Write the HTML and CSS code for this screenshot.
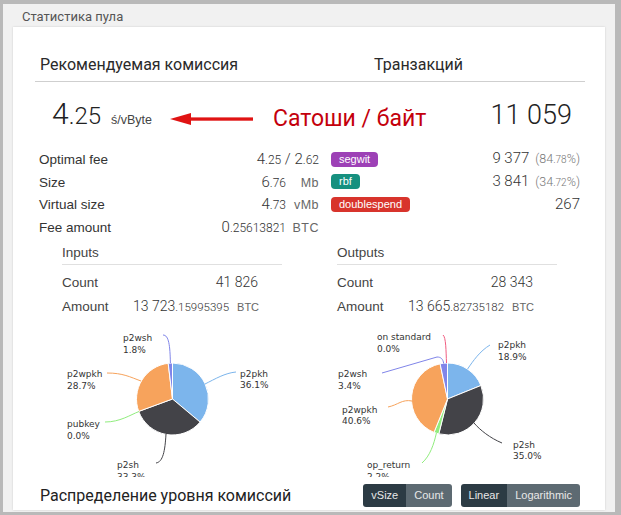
FILE: index.html
```html
<!DOCTYPE html>
<html lang="ru">
<head>
    <meta charset="UTF-8">
    <meta name="viewport" content="width=device-width, initial-scale=1.0">
    <title>Статистика пула</title>
    <link rel="stylesheet" href="styles.css">
</head>
<body>

    <div class="frame">
        <div class="panel-title">Статистика пула</div>

        <div class="card">
            <div class="head-row">
                <div class="head-left">Рекомендуемая комиссия</div>
                <div class="head-right">Транзакций</div>
            </div>

            <div class="big-row">
                <div class="big-left">
                    <span class="big-num">4<small>.25</small></span>
                    <span class="big-unit">ś/vByte</span>
                </div>
                <div class="big-right">11 059</div>
            </div>

            <!-- red annotation over the screenshot -->
            <div class="note">
                <svg class="note-arrow" width="84" height="14" viewBox="0 0 84 14">
                    <polygon points="0,7 21,1 21,13" fill="#e01313"/>
                    <rect x="19" y="5.4" width="64" height="3.3" fill="#e01313"/>
                </svg>
                <span class="note-text">Сатоши / байт</span>
            </div>

            <div class="stats">
                <div class="stat-list">
                    <div class="stat-row">
                        <span class="label">Optimal fee</span>
                        <span class="val">4<small>.25</small> / 2<small>.62</small></span>
                    </div>
                    <div class="stat-row">
                        <span class="label">Size</span>
                        <span class="val">6<small>.76</small><span class="unit">Mb</span></span>
                    </div>
                    <div class="stat-row">
                        <span class="label">Virtual size</span>
                        <span class="val">4<small>.73</small><span class="unit">vMb</span></span>
                    </div>
                    <div class="stat-row">
                        <span class="label">Fee amount</span>
                        <span class="val">0<small>.25613821</small><span class="unit">BTC</span></span>
                    </div>
                </div>
                <div class="stat-list right">
                    <div class="stat-row">
                        <span class="badge segwit">segwit</span>
                        <span class="val">9 377<span class="pct">(84<small>.78</small>%)</span></span>
                    </div>
                    <div class="stat-row">
                        <span class="badge rbf">rbf</span>
                        <span class="val">3 841<span class="pct">(34<small>.72</small>%)</span></span>
                    </div>
                    <div class="stat-row">
                        <span class="badge double">doublespend</span>
                        <span class="val">267</span>
                    </div>
                </div>
            </div>

            <div class="io">
                <div class="io-block">
                    <div class="io-title">Inputs</div>
                    <div class="io-table">
                        <div class="io-row">
                            <span class="label">Count</span>
                            <span class="val">41 826</span>
                        </div>
                        <div class="io-row">
                            <span class="label">Amount</span>
                            <span class="val">13 723<small>.15995395</small><span class="btc">BTC</span></span>
                        </div>
                    </div>
                </div>
                <div class="io-block">
                    <div class="io-title">Outputs</div>
                    <div class="io-table">
                        <div class="io-row">
                            <span class="label">Count</span>
                            <span class="val">28 343</span>
                        </div>
                        <div class="io-row">
                            <span class="label">Amount</span>
                            <span class="val">13 665<small>.82735182</small><span class="btc">BTC</span></span>
                        </div>
                    </div>
                </div>
            </div>

            <div class="pies">
                <svg class="pie" width="275" height="151" viewBox="0 0 275 151">
                    <path class="slice" d="M137.5 73 L137.5 37 A36 36 0 0 1 165.1 96.1 Z" fill="#7cb5ec"/>
                    <path class="slice" d="M137.5 73 L165.1 96.1 A36 36 0 0 1 103.7 85.4 Z" fill="#434348"/>
                    <path class="slice" d="M137.5 73 L103.7 85.4 A36 36 0 0 1 133.2 37.3 Z" fill="#f7a35c"/>
                    <path class="slice" d="M137.5 73 L133.2 37.3 A36 36 0 0 1 137.5 37 Z" fill="#8085e9"/>

                    <path class="lnk" d="M128 9 C134 9 135 20 135.4 37" stroke="#8085e9"/>
                    <path class="lnk" d="M72 47 C88 47 95 51 106 55" stroke="#f7a35c"/>
                    <path class="lnk" d="M70 96 C85 96 95 89 104 85.5" stroke="#90ed7d"/>
                    <path class="lnk" d="M121 137 C128 136 130 125 131 108" stroke="#434348"/>
                    <path class="lnk" d="M201 46 C190 47 180 53 170 58" stroke="#7cb5ec"/>

                    <text x="88" y="15">p2wsh</text><text x="88" y="27">1.8%</text>
                    <text x="32" y="51">p2wpkh</text><text x="32" y="63">28.7%</text>
                    <text x="32" y="101">pubkey</text><text x="32" y="113">0.0%</text>
                    <text x="82" y="142">p2sh</text><text x="82" y="154">33.3%</text>
                    <text x="205" y="51">p2pkh</text><text x="205" y="62">36.1%</text>
                </svg>

                <svg class="pie" width="275" height="151" viewBox="0 0 275 151">
                    <path class="slice" d="M137.5 73 L137.5 37 A36 36 0 0 1 170.9 59.5 Z" fill="#7cb5ec"/>
                    <path class="slice" d="M137.5 73 L170.9 59.5 A36 36 0 0 1 128.8 107.9 Z" fill="#434348"/>
                    <path class="slice" d="M137.5 73 L128.8 107.9 A36 36 0 0 1 124 106.4 Z" fill="#90ed7d"/>
                    <path class="slice" d="M137.5 73 L124 106.4 A36 36 0 0 1 130.1 37.8 Z" fill="#f7a35c"/>
                    <path class="slice" d="M137.5 73 L130.1 37.8 A36 36 0 0 1 137.5 37 Z" fill="#8085e9"/>

                    <path class="lnk" d="M133 9 C136 11 136 25 136.5 37" stroke="#f15c80"/>
                    <path class="lnk" d="M72 47 L127 31 C131 31 133 33 133.7 37.5" stroke="#8085e9"/>
                    <path class="lnk" d="M78 81 C88 79 92 73 102 75" stroke="#f7a35c"/>
                    <path class="lnk" d="M112 137 C120 130 124 118 126.4 107" stroke="#90ed7d"/>
                    <path class="lnk" d="M180 19 C170 25 163 35 157.6 43" stroke="#7cb5ec"/>
                    <path class="lnk" d="M192 117 C180 112 170 104 164 97" stroke="#434348"/>

                    <text x="67" y="14">on standard</text><text x="67" y="26">0.0%</text>
                    <text x="28" y="51">p2wsh</text><text x="28" y="63">3.4%</text>
                    <text x="32" y="87">p2wpkh</text><text x="32" y="98">40.6%</text>
                    <text x="57" y="142">op_return</text><text x="57" y="154">2.2%</text>
                    <text x="188" y="22">p2pkh</text><text x="188" y="34">18.9%</text>
                    <text x="203" y="122">p2sh</text><text x="203" y="133">35.0%</text>
                </svg>
            </div>

            <div class="dist-row">
                <div class="dist-title">Распределение уровня комиссий</div>
                <div class="btn-groups">
                    <div class="btn-group">
                        <span class="btn active">vSize</span>
                        <span class="btn">Count</span>
                    </div>
                    <div class="btn-group">
                        <span class="btn active">Linear</span>
                        <span class="btn">Logarithmic</span>
                    </div>
                </div>
            </div>
        </div>
    </div>

</body>
</html>
```

FILE: styles.css
```css
body {
    margin: 0;
    padding: 0;
    font-family: "Liberation Sans", Arial, sans-serif;
    background: #b9b9b9;
}

.frame {
    width: 621px;
    height: 515px;
    box-sizing: border-box;
    border-style: solid;
    border-color: #b9b9b9;
    border-width: 4px 6px 3px 3px;
    background: #f1f1f1;
    padding: 0 10px 2px 10px;
    display: flex;
    flex-direction: column;
}

.panel-title {
    height: 23px;
    line-height: 25px;
    margin-left: 9px;
    font-family: Roboto, sans-serif;
    font-size: 13px;
    color: #555;
}

.card {
    position: relative;
    flex: 1;
    background: #fff;
    box-shadow: 0 0 2px rgba(0, 0, 0, 0.15);
    padding: 28px 20px 0 22px;
}

/* header */
.head-row {
    display: grid;
    grid-template-columns: 1fr 1fr;
    padding-bottom: 6px;
    border-bottom: 1px solid #cfcfcf;
    font-family: Roboto, sans-serif;
    font-size: 16px;
    line-height: 20px;
    color: #2a2a2a;
}
.head-left {
    padding-left: 5px;
}
.head-right {
    padding-left: 64px;
}

.big-row {
    display: grid;
    grid-template-columns: 1fr 1fr;
    align-items: baseline;
    height: 66px;
    box-sizing: border-box;
    padding-top: 17px;
}
.big-left {
    display: flex;
    align-items: baseline;
    padding-left: 17px;
}
.big-num {
    font-family: Roboto, sans-serif;
    font-weight: 300;
    font-size: 30px;
    line-height: 30px;
    color: #222;
}
.big-num small {
    font-size: 24px;
}
.big-unit {
    margin-left: 10px;
    font-size: 12.5px;
    color: #444;
}
.big-right {
    text-align: right;
    padding-right: 13px;
    font-family: Roboto, sans-serif;
    font-weight: 300;
    font-size: 27px;
    line-height: 30px;
    color: #222;
}

/* annotation */
.note {
    position: absolute;
    left: 157px;
    top: 78px;
    display: flex;
    align-items: center;
}
.note-arrow {
    display: block;
}
.note-text {
    margin-left: 19px;
    font-family: Roboto, sans-serif;
    font-size: 23px;
    line-height: 27px;
    color: #c4000c;
}

/* stats */
.stats {
    display: grid;
    grid-template-columns: 288px 1fr;
}
.stat-row {
    display: flex;
    justify-content: space-between;
    align-items: baseline;
    height: 22.5px;
    line-height: 22.5px;
    padding: 0 4px;
}
.stat-list.right .stat-row {
    align-items: center;
    padding: 0 5px 0 8px;
}
.label {
    font-size: 13.5px;
    color: #333;
}
.val {
    font-family: Roboto, sans-serif;
    font-weight: 300;
    font-size: 15px;
    color: #333;
    white-space: nowrap;
}
.val small {
    font-size: 12px;
}
.unit {
    display: inline-block;
    width: 33px;
    text-align: right;
    font-family: "Liberation Sans", Arial, sans-serif;
    font-weight: normal;
    font-size: 12.5px;
    letter-spacing: 0.5px;
    color: #666;
}
.pct {
    margin-left: 6px;
    font-size: 12.5px;
    color: #777;
}
.pct small {
    font-size: 10px;
}
.badge {
    display: inline-block;
    height: 15px;
    line-height: 15px;
    padding: 0 8px;
    border-radius: 4px;
    font-size: 11px;
    color: #fff;
}
.segwit {
    background-color: #9d41b6;
}
.rbf {
    background-color: #16907f;
}
.double {
    background-color: #d8342c;
}

/* inputs / outputs */
.io {
    display: grid;
    grid-template-columns: 1fr 1fr;
    margin-top: 6px;
}
.io-block {
    padding: 0 28px 0 27px;
}
.io-title {
    font-size: 13.5px;
    line-height: 18px;
    padding-bottom: 2px;
    border-bottom: 1px solid #e0e0e0;
    color: #444;
}
.io-table {
    width: 196px;
    margin-top: 5px;
}
.io-row {
    display: grid;
    grid-template-columns: 71px 1fr;
    align-items: baseline;
    height: 24px;
    line-height: 24px;
}
.io-row .label {
    color: #444;
}
.io-row .val {
    text-align: right;
    font-size: 14px;
}
.io-row .val small {
    font-size: 11.5px;
}
.btc {
    margin-left: 8px;
    font-family: "Liberation Sans", Arial, sans-serif;
    font-weight: normal;
    font-size: 11px;
    color: #666;
}

/* pie charts */
.pies {
    display: grid;
    grid-template-columns: 1fr 1fr;
    margin-top: 8px;
}
.pie {
    display: block;
}
.pie .slice {
    stroke: #fff;
    stroke-width: 1;
}
.pie .lnk {
    fill: none;
    stroke-width: 1;
}
.pie text {
    font-family: "DejaVu Sans", sans-serif;
    font-size: 9px;
    fill: #333;
}

/* bottom row */
.dist-row {
    display: flex;
    align-items: center;
    justify-content: space-between;
    padding: 7px 5px 0 5px;
}
.dist-title {
    font-family: Roboto, sans-serif;
    font-size: 16px;
    color: #222;
}
.btn-groups {
    display: flex;
    gap: 9px;
}
.btn-group {
    display: flex;
    border-radius: 3px;
    overflow: hidden;
}
.btn {
    height: 23px;
    line-height: 23px;
    padding: 0 8px;
    font-size: 11px;
    color: #e8e8e8;
    background-color: #5d6a72;
}
.btn.active {
    background-color: #2c3b44;
}
```
